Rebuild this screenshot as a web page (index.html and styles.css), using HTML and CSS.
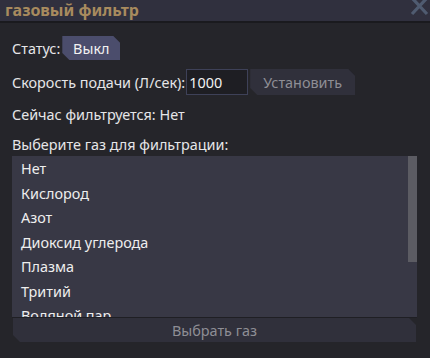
FILE: index.html
```html
<!DOCTYPE html>
<html lang="ru">
  <head>
    <title>газовый фильтр</title>
    <link rel="stylesheet" href="styles.css">
  </head>
  <body>
    <div class="window">
      <div class="titlebar">
        <span class="title">газовый фильтр</span>
        <svg class="close" width="20" height="20" viewBox="0 0 20 20">
          <path d="M3 -2 L18 14 M18 -2 L3 14" stroke="#4f5b70" stroke-width="3.2" fill="none"/>
        </svg>
      </div>

      <div class="content">
        <div class="row status-row">
          <span>Статус:</span>
          <button class="btn btn-on">Выкл</button>
        </div>

        <div class="row rate-row">
          <span>Скорость подачи (Л/сек):</span>
          <input class="rate-input" type="text" value="1000">
          <button class="btn btn-dim">Установить</button>
        </div>

        <div class="line now-line">Сейчас фильтруется: Нет</div>
        <div class="line pick-line">Выберите газ для фильтрации:</div>

        <div class="gas-list">
          <ul class="items">
            <li>Нет</li>
            <li>Кислород</li>
            <li>Азот</li>
            <li>Диоксид углерода</li>
            <li>Плазма</li>
            <li>Тритий</li>
            <li>Водяной пар</li>
          </ul>
          <div class="scroll">
            <div class="thumb"></div>
          </div>
        </div>
        <button class="btn btn-dim btn-wide">Выбрать газ</button>
      </div>
    </div>
  </body>
</html>
```

FILE: styles.css
```css
body {
  margin: 0;
  background: #25252a;
  font-family: "Noto Sans", sans-serif;
  font-size: 14.4px;
  color: #e6e6e8;
  height: 358px;
  overflow: hidden;
}

.titlebar {
  height: 21px;
  background: #30303e;
  border-bottom: 2px solid #1a1a1e;
  display: flex;
  justify-content: space-between;
  align-items: flex-start;
  padding-left: 5px;
  overflow: hidden;
}

.title {
  font-weight: bold;
  font-size: 16px;
  line-height: 20px;
  color: #a88b5e;
}

.close {
  margin-top: 0;
  margin-right: 1px;
}

.content {
  padding: 0 13px 0 12px;
  display: flex;
  flex-direction: column;
}

.row {
  display: flex;
  align-items: center;
}

.status-row {
  margin-top: 13px;
  height: 24px;
}

.rate-row {
  margin-top: 9px;
  height: 26px;
}

.btn {
  font-family: "Noto Sans", sans-serif;
  font-size: 14.4px;
  border: none;
  padding: 0 11px;
  height: 24px;
  clip-path: polygon(0 0, calc(100% - 7px) 0, 100% 7px, 100% 100%, 7px 100%, 0 calc(100% - 7px));
}

.btn-on {
  background: #4b4d6c;
  color: #f2f2f2;
  margin-left: 2px;
  width: 58px;
  padding: 0;
}

.btn-dim {
  background: #30303b;
  color: #8e8e95;
}

.rate-input {
  width: 62px;
  height: 26px;
  box-sizing: border-box;
  margin-left: 1px;
  background: #1e1e23;
  border: 1px solid #3e4158;
  color: #f2f2f2;
  font-family: "Noto Sans", sans-serif;
  font-size: 14.4px;
  padding: 0 2px;
  outline: none;
}

.rate-row .btn-dim {
  margin-left: 2px;
  width: 105px;
  height: 26px;
}

.line {
  line-height: 18px;
}

.now-line {
  margin-top: 11px;
}

.pick-line {
  margin-top: 12px;
}

.gas-list {
  margin-top: 2px;
  height: 161px;
  background: #383845;
  border-bottom: 1px solid #1f1f24;
  display: flex;
  overflow: hidden;
}

.items {
  list-style: none;
  margin: 0;
  padding: 1px 0 0 0;
  flex: 1;
}

.items li {
  height: 24.5px;
  line-height: 24.5px;
  padding-left: 9px;
  color: #eeeeee;
}

.scroll {
  width: 9px;
}

.thumb {
  height: 106px;
  background: #5c5c63;
}

.btn-wide {
  width: 403px;
  margin-left: 1px;
  height: 24px;
}
```
